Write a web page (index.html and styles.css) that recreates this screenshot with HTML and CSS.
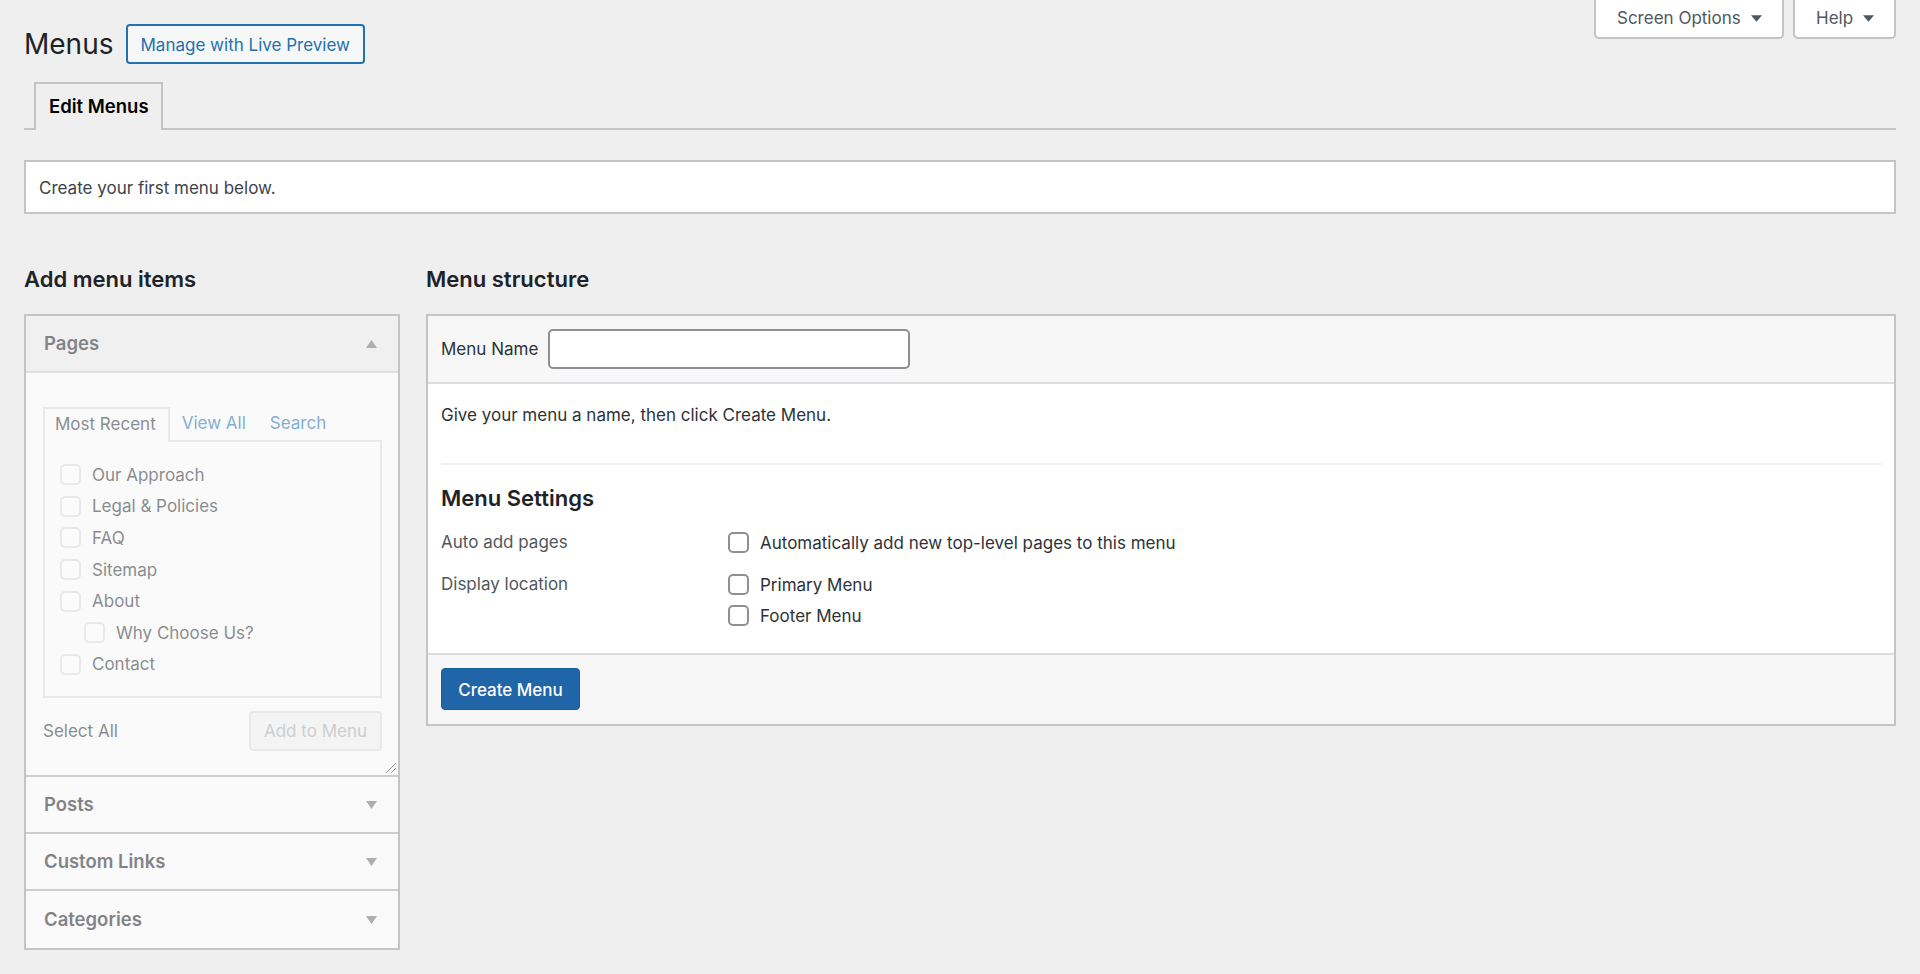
FILE: index.html
```html
<!DOCTYPE html>
<html lang="en">
<head>
<meta charset="utf-8">
<title>Menus</title>
<link rel="stylesheet" href="styles.css">
</head>
<body>
<div class="wrap">
  <header class="top">
    <div class="title-row">
      <h1>Menus</h1>
      <a class="live-btn" href="#">Manage with Live Preview</a>
    </div>
    <div class="meta-links">
      <button class="meta-btn meta-screen">Screen Options <svg class="caret" viewBox="0 0 10 6"><path d="M0 0h10L5 6z"/></svg></button>
      <button class="meta-btn meta-help">Help <svg class="caret" viewBox="0 0 10 6"><path d="M0 0h10L5 6z"/></svg></button>
    </div>
  </header>
  <nav class="tabs"><a class="tab" href="#">Edit Menus</a></nav>
  <div class="notice">Create your first menu below.</div>
  <div class="columns">
    <section class="col-left">
      <h2>Add menu items</h2>
      <div class="accordion">
        <div class="acc-head acc-open"><span>Pages</span><svg class="tri" viewBox="0 0 10 6" preserveAspectRatio="none"><path d="M0 6h10L5 0z"/></svg></div>
        <div class="acc-body">
          <div class="sub-tabs">
            <span class="sub-tab active">Most Recent</span>
            <a class="sub-tab" href="#">View All</a>
            <a class="sub-tab" href="#">Search</a>
          </div>
          <ul class="page-list">
            <li><span class="cb"></span>Our Approach</li>
            <li><span class="cb"></span>Legal &amp; Policies</li>
            <li><span class="cb"></span>FAQ</li>
            <li><span class="cb"></span>Sitemap</li>
            <li><span class="cb"></span>About</li>
            <li class="child"><span class="cb"></span>Why Choose Us?</li>
            <li><span class="cb"></span>Contact</li>
          </ul>
          <div class="acc-actions">
            <span>Select All</span>
            <button class="add-btn">Add to Menu</button>
          </div>
          <svg class="resize" viewBox="0 0 10 10"><path d="M0 10L10 0M5 10l5-5" /></svg>
        </div>
        <div class="acc-head"><span>Posts</span><svg class="tri" viewBox="0 0 10 6" preserveAspectRatio="none"><path d="M0 0h10L5 6z"/></svg></div>
        <div class="acc-head"><span>Custom Links</span><svg class="tri" viewBox="0 0 10 6" preserveAspectRatio="none"><path d="M0 0h10L5 6z"/></svg></div>
        <div class="acc-head"><span>Categories</span><svg class="tri" viewBox="0 0 10 6" preserveAspectRatio="none"><path d="M0 0h10L5 6z"/></svg></div>
      </div>
    </section>
    <section class="col-right">
      <h2>Menu structure</h2>
      <div class="menu-box">
        <div class="menu-head">
          <label class="name-label" for="menu-name">Menu Name</label>
          <input class="name-input" id="menu-name" type="text">
        </div>
        <div class="menu-body">
          <p class="hint">Give your menu a name, then click Create Menu.</p>
          <div class="settings">
            <h3>Menu Settings</h3>
            <div class="setting setting-auto">
              <div class="setting-label">Auto add pages</div>
              <div class="setting-opts">
                <div class="opt"><span class="cb cb-on"></span>Automatically add new top-level pages to this menu</div>
              </div>
            </div>
            <div class="setting">
              <div class="setting-label">Display location</div>
              <div class="setting-opts">
                <div class="opt"><span class="cb cb-on"></span>Primary Menu</div>
                <div class="opt"><span class="cb cb-on"></span>Footer Menu</div>
              </div>
            </div>
          </div>
        </div>
        <div class="menu-foot"><button class="primary">Create Menu</button></div>
      </div>
    </section>
  </div>
</div>
</body>
</html>
```
FILE: styles.css
```css
* { box-sizing: border-box; }
html, body { margin: 0; height: 100%; }
body {
  background: #efefef;
  color: #2c3338;
  font-family: Inter, "Liberation Sans", sans-serif;
  font-size: 17px;
  line-height: 1.4;
  overflow: hidden;
}
a { text-decoration: none; }
.wrap { padding: 0 24px; }
.top { display: flex; justify-content: space-between; align-items: flex-start; }
.title-row { display: flex; align-items: center; gap: 12px; margin-top: 24px; }
h1 { margin: 0; font-size: 28px; font-weight: 400; color: #1d2327; line-height: 40px; }
.live-btn {
  display: flex; align-items: center; height: 40px; padding: 3px 13px 0;
  border: 2px solid #2271b1; border-radius: 4px; background: #f6f7f7;
  color: #2271b1; font-size: 17px;
}
.meta-links { display: flex; gap: 9px; }
.meta-btn {
  display: flex; align-items: center; gap: 10px; height: 39px;
  background: #fff; border: 2px solid #c3c4c7; border-top: 0;
  border-radius: 0 0 5px 5px; color: #50575e; font: inherit; font-size: 17px;
}
.meta-screen { width: 190px; padding: 0 0 0 21px; }
.meta-help { width: 103px; padding: 0 0 0 21px; }
.caret { width: 11px; height: 7px; fill: #50575e; }
.tabs { margin-top: 18px; height: 48px; border-bottom: 2px solid #c3c4c7; padding-left: 10px; display: flex; }
.tab {
  display: block; height: 48px; padding: 10px 12px 0 13px; font-size: 18.5px; font-weight: 600;
  color: #000; background: #efefef; border: 2px solid #c3c4c7; border-bottom: 0;
}
.notice {
  margin-top: 30px; height: 54px; background: #fff; border: 2px solid #c3c4c7;
  padding: 3px 13px 0; display: flex; align-items: center; color: #3c434a;
}
.columns { display: flex; gap: 26px; margin-top: 49px; align-items: flex-start; }
.col-left { width: 376px; flex: none; }
.col-right { flex: 1; min-width: 0; }
h2 { margin: 0 0 18px; font-size: 22px; font-weight: 600; line-height: 33px; color: #1d2327; }
.accordion { border: 2px solid #c3c4c7; background: #fafafa; }
.accordion > * { opacity: .55; }
.acc-head {
  height: 57px; display: flex; justify-content: space-between; align-items: center;
  padding: 0 21px 0 18px; font-size: 18.5px; font-weight: 600; color: #1d2327;
  background: #fafafa; border-bottom: 2px solid #a9a9a9;
}
.acc-head:last-child { border-bottom: 0; }
.acc-head.acc-open { background: #e9e9e9; border-bottom-color: #c8c8c8; }
.tri { width: 11px; height: 8px; fill: #6e7378; }
.acc-body { position: relative; height: 404px; padding: 34px 16px 0 17px; background: #fafafa; border-bottom: 2px solid #a9a9a9; }
.sub-tabs { display: flex; height: 33px; }
.sub-tab { padding: 0 12px; line-height: 32px; height: 33px; color: #2271b1; }
.sub-tab.active {
  padding: 0 12px 0 10px; color: #2c3338; background: #fafafa; border: 2px solid #dcdcde; border-bottom: 0;
  height: 35px; position: relative; z-index: 1; line-height: 30px;
}
.page-list {
  list-style: none; margin: 0; padding: 17px 15px 0; height: 258px;
  background: #fafafa; border: 2px solid #dcdcde;
}
.page-list li { display: flex; align-items: center; height: 31.6px; padding-top: 2px; gap: 11px; color: #2c3338; }
.page-list li.child { padding-left: 24px; }
.page-list .cb { margin-bottom: 2px; }
.cb {
  display: block; flex: none; width: 21px; height: 21px; background: #fcfcfc;
  border: 2px solid #dcdcde; border-radius: 5px;
}
.cb-on { background: #fff; border-color: #8c8f94; margin: -2px 0 2px; }
.acc-actions { display: flex; justify-content: space-between; align-items: center; margin-top: 13px; color: #2c3338; }
.acc-actions span { padding-top: 2px; }
.add-btn {
  width: 133px; height: 40px; background: #f0f0f1; border: 2px solid #dcdcde; border-radius: 4px;
  color: #a7aaad; font: inherit; font-size: 17px; padding: 2px 0 0;
}
.resize { position: absolute; right: 2px; bottom: 2px; width: 10px; height: 10px; fill: none; stroke: #50575e; stroke-width: 1; }
.menu-box { border: 2px solid #c3c4c7; background: #fff; }
.menu-head {
  display: flex; align-items: center; gap: 10px; height: 68px; padding: 0 13px;
  background: #f7f7f7; border-bottom: 2px solid #dcdcde;
}
.name-label { color: #2c3338; padding-top: 1px; }
.name-input {
  width: 362px; height: 40px; border: 2px solid #8c8f94; border-radius: 5px; background: #fff; padding: 0 8px;
}
.menu-body { padding: 0 12px 0 13px; height: 269px; }
.hint { margin: 0; padding-top: 20px; height: 81px; color: #2c3338; border-bottom: 2px solid #f0f0f1; }
.settings { padding-top: 17px; }
h3 { margin: 0; font-size: 22px; font-weight: 600; line-height: 33px; color: #1d2327; }
.setting { display: flex; }
.setting-auto { margin: 17px 0 20px; }
.setting-label { width: 287px; flex: none; color: #50575e; line-height: 20px; }
.setting-opts { display: flex; flex-direction: column; gap: 9px; }
.opt { display: flex; align-items: center; gap: 11px; height: 22px; padding-top: 2px; color: #2c3338; }
.menu-foot { height: 71px; padding: 13px 13px 0; background: #f7f7f7; border-top: 2px solid #dcdcde; }
.primary {
  width: 139px; height: 42px; padding: 3px 0 0; background: #2065a8; border: 1px solid #135e96; border-radius: 4px;
  color: #fff; font: inherit; font-size: 17px; font-weight: 500;
}
```
